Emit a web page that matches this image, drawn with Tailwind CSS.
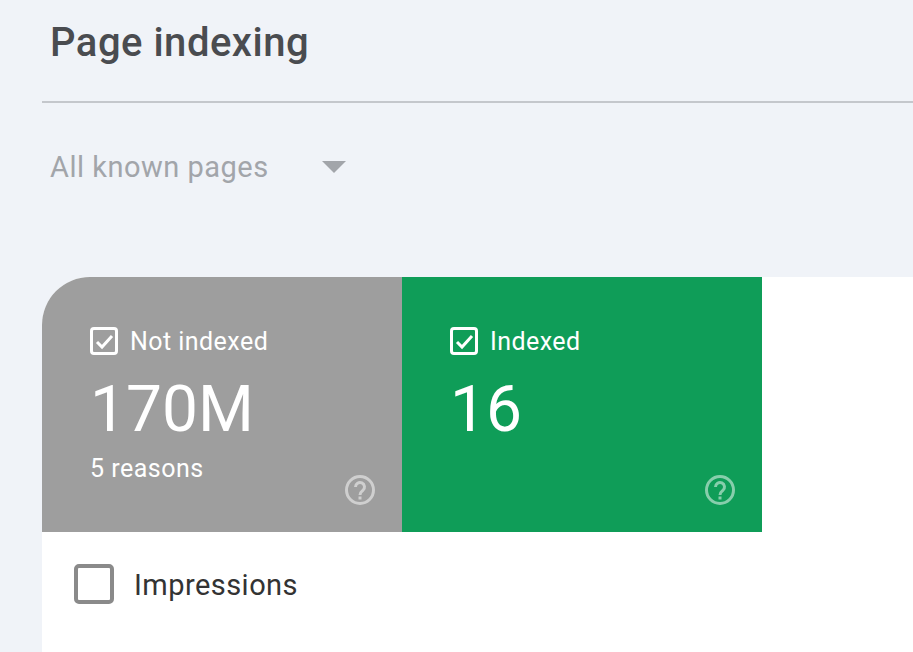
<!DOCTYPE html>
<html lang="en">
<head>
  <meta charset="UTF-8">
  <title>Page indexing</title>
  <script src="https://cdn.jsdelivr.net/npm/@tailwindcss/browser@4"></script>
</head>
<body class="bg-[#f0f3f8] h-[652px] overflow-hidden font-['Roboto',sans-serif]">
  <!-- Header -->
  <div class="ml-[42px]">
    <div class="h-[103px] border-b-2 border-[#c4c7cc] pl-[8px] pt-[18px]">
      <h1 class="text-[40px] leading-[50px] font-medium text-[#4a4c50] tracking-[0.5px]">Page indexing</h1>
    </div>

    <!-- Filter -->
    <div class="h-[174px] pl-[8px] pt-[46px]">
      <div class="flex items-center text-[#a2a5aa]">
        <span class="text-[29px] leading-[36px] tracking-[0.5px]">All known pages</span>
        <span class="ml-[53px] w-0 h-0 border-x-[12px] border-x-transparent border-t-[12px] border-t-[#a2a5aa]"></span>
      </div>
    </div>

    <!-- Card -->
    <div class="bg-white rounded-tl-[48px] h-[375px] overflow-hidden">
      <div class="flex">
        <!-- Not indexed tile -->
        <div class="relative w-[360px] h-[255px] bg-[#9e9e9e] text-white pl-[48px] pt-[50px]">
          <div class="flex items-center h-[28px]">
            <svg class="w-[28px] h-[28px]" viewBox="0 0 28 28" fill="none" stroke="white">
              <rect x="1.5" y="1.5" width="25" height="25" rx="2.5" stroke-width="3"/>
              <path d="M7 15l5 5 10-11" stroke-width="3"/>
            </svg>
            <span class="ml-[12px] text-[25px] leading-[30px] mt-[2px] tracking-[0.45px]">Not indexed</span>
          </div>
          <div class="mt-[20px] text-[64px] leading-[70px]">170M</div>
          <div class="mt-[9px] text-[25px] leading-[30px] tracking-[0.5px]">5 reasons</div>
          <svg class="absolute right-[27px] bottom-[27px] w-[30px] h-[30px] text-white/50" viewBox="0 0 30 30" fill="none" stroke="currentColor">
            <circle cx="15" cy="15" r="13.5" stroke-width="3"/>
            <path d="M10.5 12a4.5 4.5 0 1 1 7.4 3.4c-1.7 1.4-2.9 2.2-2.9 4.6" stroke-width="3"/>
            <rect x="13.5" y="21.5" width="3" height="3" fill="currentColor" stroke="none"/>
          </svg>
        </div>
        <!-- Indexed tile -->
        <div class="relative w-[360px] h-[255px] bg-[#0f9d58] text-white pl-[48px] pt-[50px]">
          <div class="flex items-center h-[28px]">
            <svg class="w-[28px] h-[28px]" viewBox="0 0 28 28" fill="none" stroke="white">
              <rect x="1.5" y="1.5" width="25" height="25" rx="2.5" stroke-width="3"/>
              <path d="M7 15l5 5 10-11" stroke-width="3"/>
            </svg>
            <span class="ml-[12px] text-[25px] leading-[30px] mt-[2px] tracking-[0.45px]">Indexed</span>
          </div>
          <div class="mt-[20px] text-[64px] leading-[70px]">16</div>
          <svg class="absolute right-[27px] bottom-[27px] w-[30px] h-[30px] text-white/50" viewBox="0 0 30 30" fill="none" stroke="currentColor">
            <circle cx="15" cy="15" r="13.5" stroke-width="3"/>
            <path d="M10.5 12a4.5 4.5 0 1 1 7.4 3.4c-1.7 1.4-2.9 2.2-2.9 4.6" stroke-width="3"/>
            <rect x="13.5" y="21.5" width="3" height="3" fill="currentColor" stroke="none"/>
          </svg>
        </div>
      </div>

      <!-- Impressions -->
      <div class="flex items-center pl-[32px] pt-[31px]">
        <span class="w-[40px] h-[40px] rounded-[5px] border-[4px] border-[#8a8a8a]"></span>
        <span class="ml-[20px] mt-[2px] text-[29px] leading-[40px] text-[#333] tracking-[0.45px]">Impressions</span>
      </div>
    </div>
  </div>
</body>
</html>
